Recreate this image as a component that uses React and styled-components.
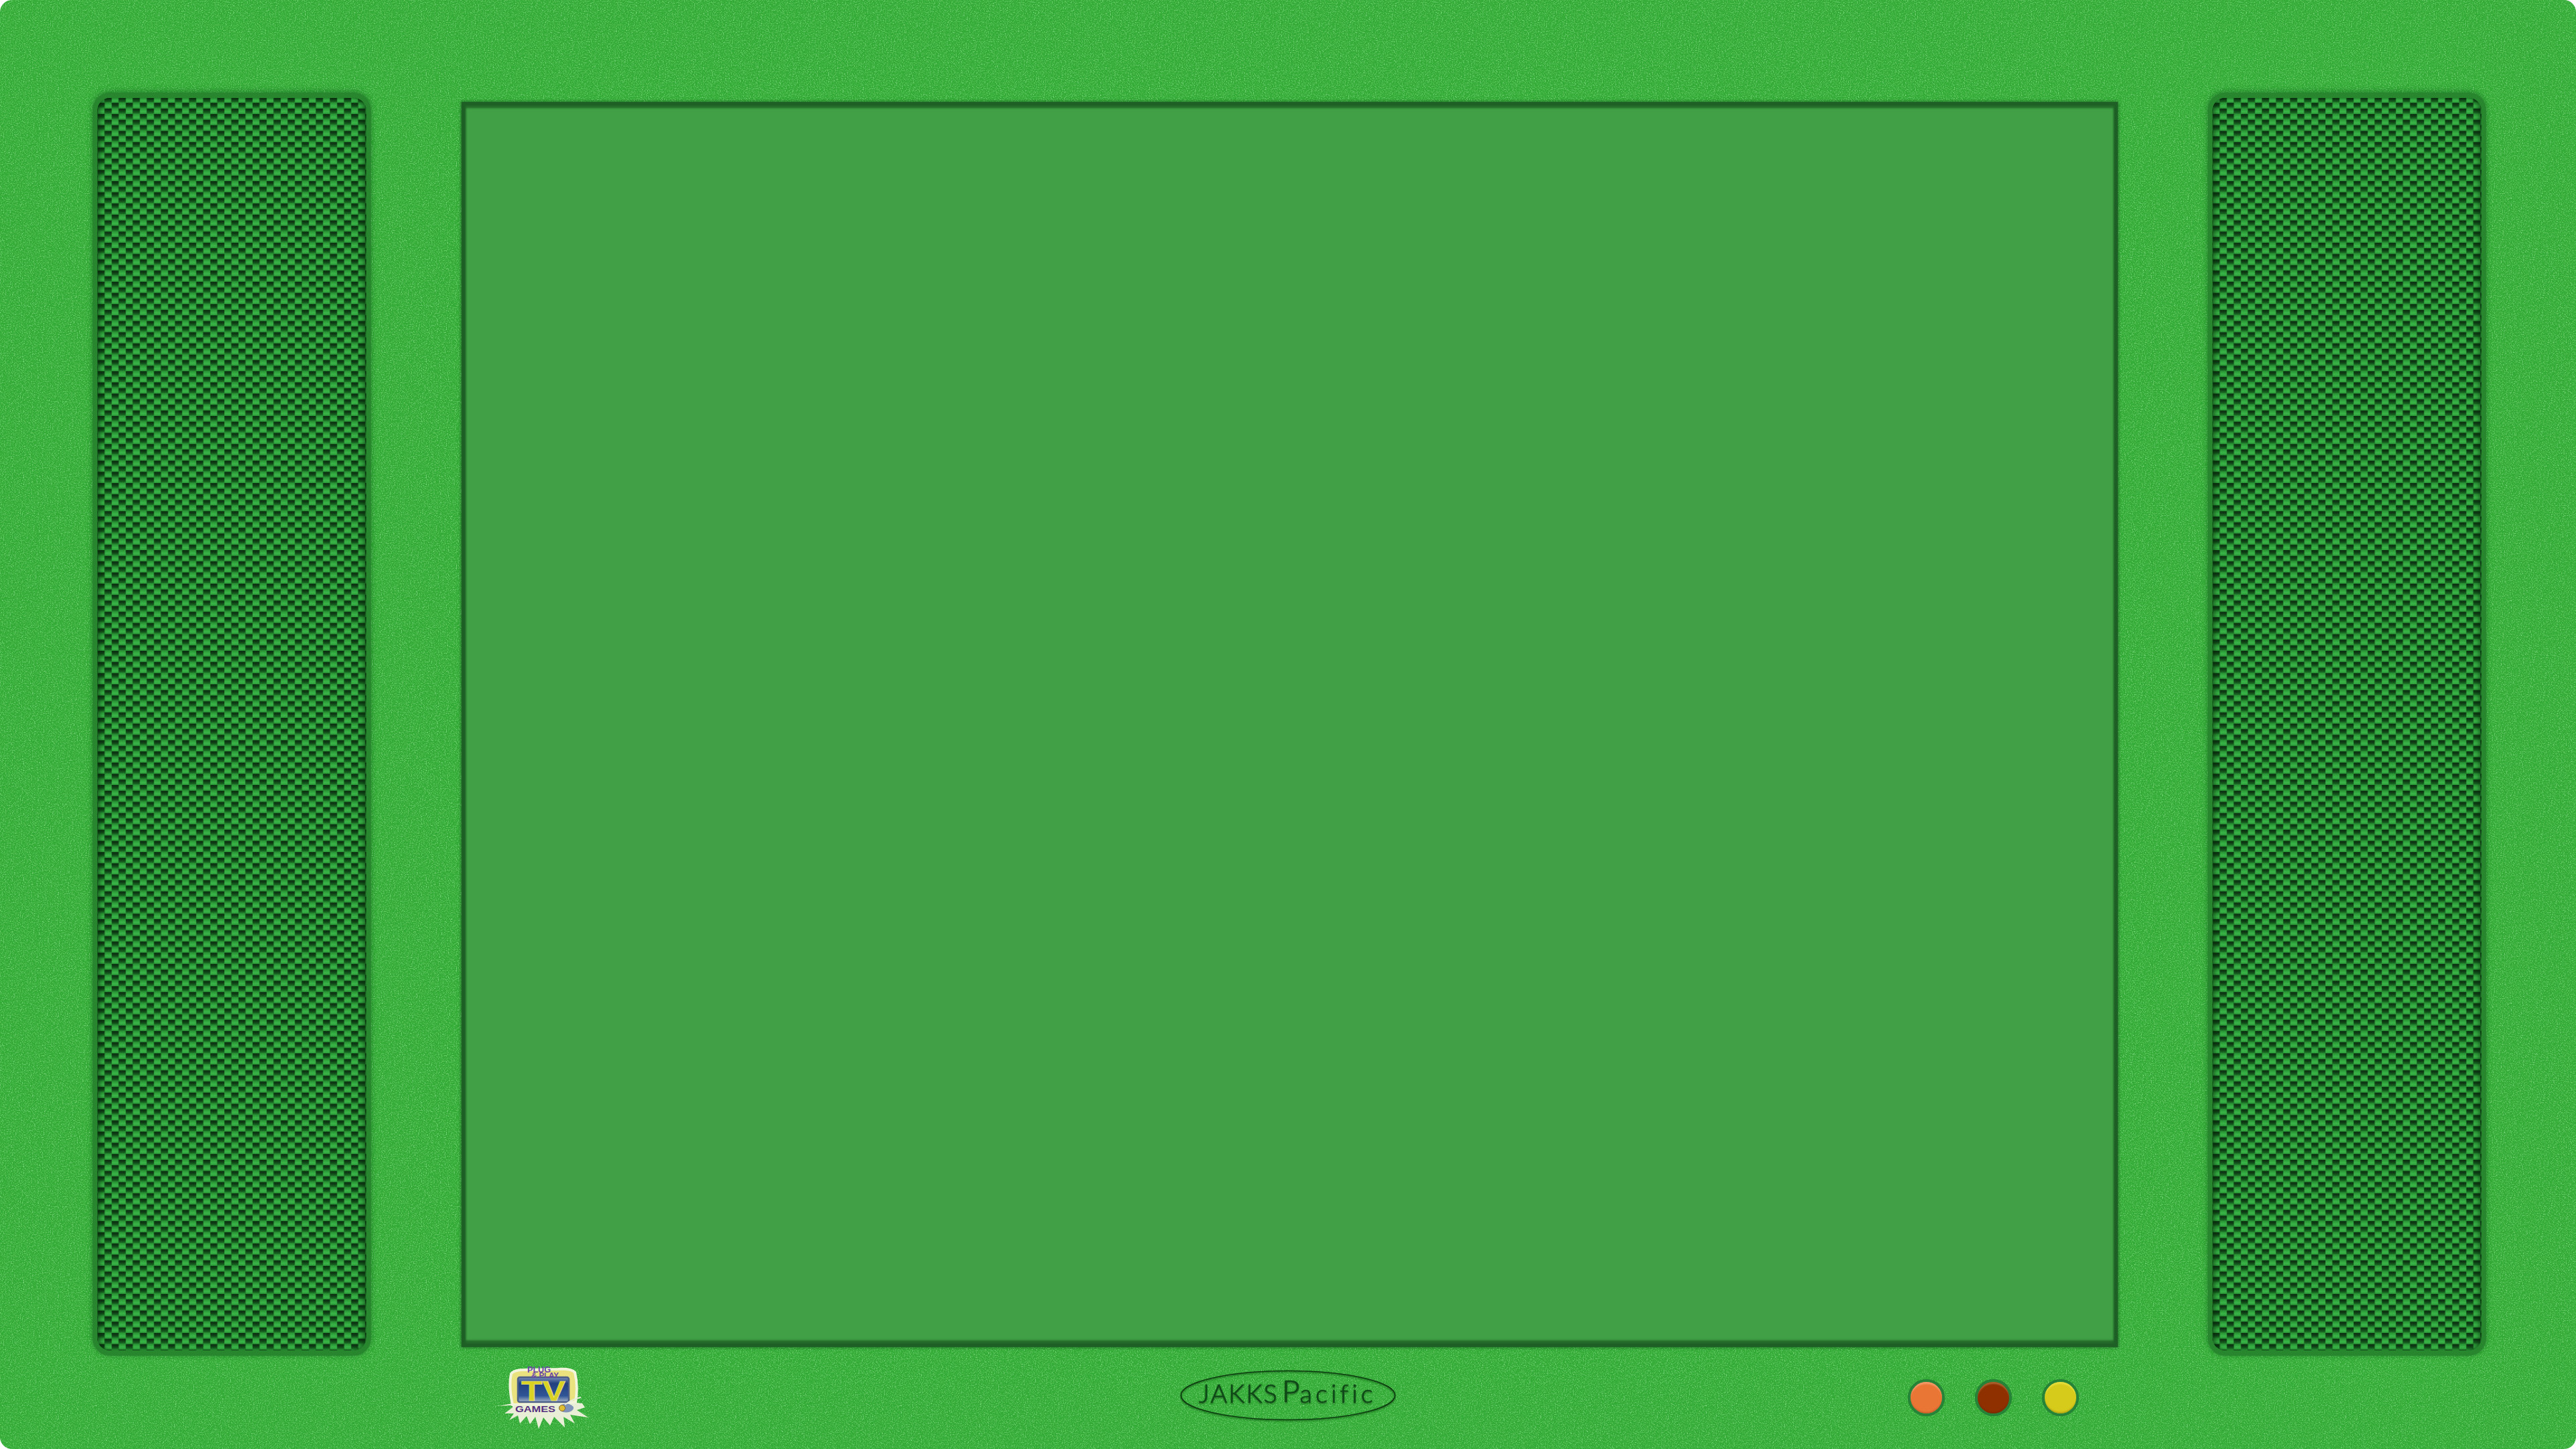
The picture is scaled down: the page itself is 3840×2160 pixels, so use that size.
import React from "react";
import styled, { createGlobalStyle } from "styled-components";

const noise = `url("data:image/svg+xml,${encodeURIComponent(
  `<svg xmlns='http://www.w3.org/2000/svg' width='600' height='600'><filter id='n' x='0' y='0' width='100%' height='100%'><feTurbulence type='fractalNoise' baseFrequency='0.6' numOctaves='2' seed='7' stitchTiles='stitch'/><feColorMatrix values='0 0 0 0 0.26  0 0 0 0 0.75  0 0 0 0 0.27  1.5 1.5 0 0 -1.42'/></filter><rect width='600' height='600' filter='url(#n)'/></svg>`
)}")`;

const Global = createGlobalStyle`
  html, body { margin: 0; padding: 0; background: #fff; }
  #root { width: 3840px; height: 2160px; }
`;

const Console = styled.main`
  width: 3840px;
  height: 2160px;
  box-sizing: border-box;
  padding: 138px 134px 0 138px;
  border-radius: 18px;
  overflow: hidden;
  background-color: #32aa35;
  background-image: ${noise};
  display: flex;
  flex-direction: column;
`;

const Deck = styled.section`
  display: flex;
  align-items: flex-start;
  justify-content: space-between;
  height: 1883px;
`;

const SpeakerRim = styled.div`
  width: 415px;
  height: 1883px;
  box-sizing: border-box;
  padding: 8px 7px;
  border-radius: 26px;
  background: #28862f;
  box-shadow: 0 -3px 10px rgba(20, 90, 30, 0.32), 0 0 6px rgba(20, 90, 30, 0.28);
`;

const Grille = styled.div`
  position: relative;
  width: 100%;
  height: 100%;
  border-radius: 19px;
  overflow: hidden;
  background: #0e3513;
  svg { display: block; width: 100%; height: 100%; }
  &::after {
    content: "";
    position: absolute;
    inset: 0;
    border-radius: inherit;
    box-shadow: inset 7px 0 6px -3px rgba(6, 40, 10, 0.55), inset -7px 0 6px -3px rgba(6, 40, 10, 0.55);
  }
`;

const Screen = styled.div`
  width: 2469px;
  height: 1856px;
  margin-top: 14px;
  background: #41a046;
  box-shadow:
    inset 0 0 0 5px #1d5f25,
    inset 0 3px 3px 6px rgba(29, 95, 37, 0.85),
    inset 0 -4px 3px 6px rgba(29, 95, 37, 0.85),
    0 0 4px 1px rgba(24, 90, 32, 0.75);
`;

const Footer = styled.footer`
  display: flex;
  align-items: center;
  height: 106px;
  margin: 9px 0 0 582px;
`;

const BrandMark = styled.svg`
  display: block;
  flex: none;
  width: 180px;
  height: 106px;
`;

const MakerMark = styled.svg`
  display: block;
  flex: none;
  width: 340px;
  height: 106px;
  margin-left: 850px;
  overflow: visible;
`;

const Lamps = styled.div`
  display: flex;
  gap: 45px;
  margin-left: 754px;
`;

const Lamp = styled.div`
  width: 55px;
  height: 55px;
  box-sizing: border-box;
  padding: 4px;
  border-radius: 50%;
  background: #27853a;
  box-shadow: inset 0 0 2px #1f6f2c;
  &::after {
    content: "";
    display: block;
    width: 47px;
    height: 47px;
    border-radius: 50%;
    background: ${p => p.$face};
    box-shadow: inset 0 4px 2px -1px ${p => p.$light}, inset 0 -3px 2px -1px ${p => p.$dark};
  }
`;

const tile = [
  ["0", "#1f7a2a"],
  [".14", "#2b9a37"],
  [".38", "#3ab648"],
  [".58", "#2c9c39"],
  [".62", "#0b2e10"],
  [".8", "#0f3c15"],
  ["1", "#196a23"],
];

function Weave({ id }) {
  return (
    <svg aria-hidden="true">
      <defs>
        <linearGradient id={id + "g"} x1="0" y1="0" x2="0" y2="1">
          {tile.map(([o, c]) => <stop key={o} offset={o} stopColor={c} />)}
        </linearGradient>
        <pattern id={id} width="21" height="16.67" patternUnits="userSpaceOnUse" patternTransform="translate(0.5 -2.63)">
          <rect x="0" y="0" width="10.5" height="16.67" fill={`url(#${id}g)`} />
          <rect x="10.5" y="8.335" width="10.5" height="16.67" fill={`url(#${id}g)`} />
          <rect x="10.5" y="-8.335" width="10.5" height="16.67" fill={`url(#${id}g)`} />
        </pattern>
      </defs>
      <rect width="100%" height="100%" fill={`url(#${id})`} />
    </svg>
  );
}

function PlugPlayLogo() {
  return (
    <BrandMark viewBox="0 20 180 106" aria-label="Plug & Play TV Games">
      <defs>
        <linearGradient id="tvBlue" x1="0" y1="0" x2="0" y2="1">
          <stop offset="0" stopColor="#7b90b8" />
          <stop offset=".25" stopColor="#23407f" />
          <stop offset=".75" stopColor="#2f5596" />
          <stop offset="1" stopColor="#a8b6c8" />
        </linearGradient>
      </defs>
      <polygon
        fill="#e9efd6"
        points="23,86 44,82 44,88 32,97 46,97 39,107 52,100 55,112 65,101 70,113 78,102 83,120 90,103 100,115 106,102 122,118 120,102 137,112 130,99 157,103 140,92 152,88 148,82 132,80"
      />
      <path d="M42 38 Q46 32 62 32 L112 31 Q132 30 137 36 Q142 56 138 80 L44 84 Q38 56 42 38 Z" fill="#e9e27e" stroke="#f2f5dc" strokeWidth="4" />
      <rect x="52" y="43" width="76" height="37" rx="3" fill="url(#tvBlue)" stroke="#4d5f86" strokeWidth="2.5" />
      <text x="90" y="78" textAnchor="middle" fontFamily="'Liberation Sans', sans-serif" fontWeight="700" fontSize="43" textLength="66" lengthAdjust="spacingAndGlyphs" fill="#d9d222" stroke="#efeb9c" strokeWidth=".6">TV</text>
      <text x="66" y="36" fontFamily="'Liberation Sans', sans-serif" fontWeight="700" fontSize="13" textLength="35" lengthAdjust="spacingAndGlyphs" fill="#6a45a8">PLUG</text>
      <text x="72" y="43.5" fontFamily="'Liberation Sans', sans-serif" fontWeight="700" fontSize="10" textLength="41" lengthAdjust="spacingAndGlyphs" fill="#6a45a8">&amp; PLAY</text>
      <rect x="46" y="84" width="88" height="12" rx="2" fill="#e9efd6" />
      <text x="48" y="95" fontFamily="'Liberation Sans', sans-serif" fontWeight="700" fontSize="13" textLength="60" lengthAdjust="spacingAndGlyphs" fill="#55307f">GAMES</text>
      <ellipse cx="124" cy="89" rx="11" ry="6.5" fill="#7f93b8" />
      <circle cx="118" cy="89" r="4.5" fill="#e0bf30" stroke="#8a6a30" strokeWidth="1" />
      <path d="M122 84 Q132 76 146 73" fill="none" stroke="#e9eddc" strokeWidth="2" />
    </BrandMark>
  );
}

function JakksLogo() {
  return (
    <MakerMark viewBox="1750 2030 340 106" aria-label="Jakks Pacific">
      <defs>
        <filter id="emboss" x="-5%" y="-20%" width="110%" height="150%">
          <feDropShadow dx="0" dy="1.5" stdDeviation="1" floodColor="#0a3a10" floodOpacity=".7" />
        </filter>
      </defs>
      <g filter="url(#emboss)">
        <ellipse cx="1920" cy="2080" rx="159.5" ry="36.5" fill="none" stroke="#0b3a11" strokeWidth="1.6" />
        <text x="1787" y="2091" fontFamily="Lato, sans-serif" fontWeight="300" fill="#0f4716" stroke="#0f4716" strokeWidth=".6">
          <tspan fontSize="38" letterSpacing="2">JAKKS</tspan>
          <tspan x="1911" y="2090" fontSize="46">P</tspan>
          <tspan fontSize="38" letterSpacing="5" y="2091">acific</tspan>
        </text>
      </g>
    </MakerMark>
  );
}

export default function App() {
  return (
    <>
      <Global />
      <Console>
        <Deck>
          <SpeakerRim><Grille><Weave id="weaveL" /></Grille></SpeakerRim>
          <Screen />
          <SpeakerRim><Grille><Weave id="weaveR" /></Grille></SpeakerRim>
        </Deck>
        <Footer>
          <PlugPlayLogo />
          <MakerMark as={JakksLogo} />
          <Lamps>
            <Lamp $face="#ea7636" $light="#f19a6a" $dark="#c9602c" />
            <Lamp $face="#8e3000" $light="#a9632f" $dark="#7c2a00" />
            <Lamp $face="#d6cb1b" $light="#e6dc3c" $dark="#b3a714" />
          </Lamps>
        </Footer>
      </Console>
    </>
  );
}
